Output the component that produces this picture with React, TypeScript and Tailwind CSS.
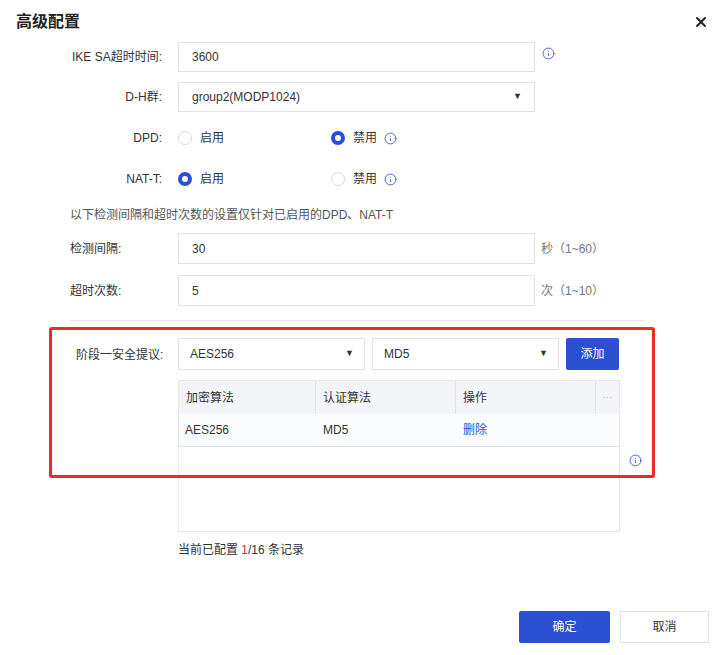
import { X, Info } from "lucide-react";

const font = { fontFamily: '"Liberation Sans", "Noto Sans CJK SC", sans-serif' };

const Caret = () => <span className="text-[9px] text-[#333]">▼</span>;

const Radio = ({ on, label }: { on?: boolean; label: string }) => (
  <div className="flex w-[153px] items-center gap-2">
    <span
      className={
        on
          ? "h-[14px] w-[14px] rounded-full border-[4px] border-[#2b4fd1] bg-white"
          : "h-[14px] w-[14px] rounded-full border border-[#d9d9d9] bg-white"
      }
    />
    <span>{label}</span>
  </div>
);

const InfoIcon = () => <Info className="h-[13px] w-[13px] text-[#3552c8]" strokeWidth={1.6} />;

export default function App() {
  return (
    <div className="h-[655px] w-[719px] bg-white text-[12px] text-[#333]" style={font}>
      <div className="flex items-center justify-between pl-[16px] pr-[10px] pt-[10px]">
        <span className="text-[16px] font-bold text-[#222]">高级配置</span>
        <X className="h-[16px] w-[16px] text-[#222]" strokeWidth={3} />
      </div>

      <div className="mt-[8px] flex items-center">
        <span className="w-[166px] pr-[4px] text-right">IKE SA超时时间:</span>
        <div className="ml-[12px] flex h-[30px] w-[357px] items-center border border-[#e3e3e3] px-[13px]">3600</div>
        <span className="ml-[7px] -mt-[8px]"><InfoIcon /></span>
      </div>
      <div className="mt-[10px] flex items-center">
        <span className="w-[166px] pr-[4px] text-right">D-H群:</span>
        <div className="ml-[12px] flex h-[30px] w-[357px] items-center justify-between border border-[#e3e3e3] pl-[13px] pr-[12px]">
          <span>group2(MODP1024)</span>
          <Caret />
        </div>
      </div>
      <div className="mt-[11px] flex h-[30px] items-center">
        <span className="w-[166px] pr-[4px] text-right">DPD:</span>
        <div className="ml-[12px] flex items-center">
          <Radio label="启用" />
          <Radio on label="禁用" />
        </div>
        <span className="-ml-[100px]"><InfoIcon /></span>
      </div>
      <div className="mt-[11px] flex h-[30px] items-center">
        <span className="w-[166px] pr-[4px] text-right">NAT-T:</span>
        <div className="ml-[12px] flex items-center">
          <Radio on label="启用" />
          <Radio label="禁用" />
        </div>
        <span className="-ml-[100px]"><InfoIcon /></span>
      </div>
      <div className="mt-[12px] pl-[70px] text-[#555]">以下检测间隔和超时次数的设置仅针对已启用的DPD、NAT-T</div>
      <div className="mt-[9px] flex items-center">
        <span className="w-[178px] shrink-0 pl-[70px]">检测间隔:</span>
        <div className="flex h-[31px] w-[357px] items-center border border-[#e3e3e3] px-[13px]">30</div>
        <span className="ml-[6px] text-[#777]">秒（1~60）</span>
      </div>
      <div className="mt-[11px] flex items-center">
        <span className="w-[178px] shrink-0 pl-[70px]">超时次数:</span>
        <div className="flex h-[31px] w-[357px] items-center border border-[#e3e3e3] px-[13px]">5</div>
        <span className="ml-[6px] text-[#777]">次（1~10）</span>
      </div>
      <div className="ml-[70px] mt-[14px] h-px w-[575px] bg-[#e6e6e6]" />

      <div className="relative mt-[6px]">
        <div className="absolute left-[49px] top-0 h-[151px] w-[606px] rounded-[3px] border-[3px] border-[#ee2a24]" />
        <div className="flex pt-[11px]">
          <span className="w-[178px] shrink-0 pl-[76px] pt-[8px]">阶段一安全提议:</span>
          <div className="flex flex-col">
            <div className="flex items-center">
              <div className="flex h-[32px] w-[187px] items-center justify-between border border-[#e3e3e3] pl-[11px] pr-[10px]">
                <span>AES256</span>
                <Caret />
              </div>
              <div className="ml-[7px] flex h-[32px] w-[187px] items-center justify-between border border-[#e3e3e3] pl-[11px] pr-[10px]">
                <span>MD5</span>
                <Caret />
              </div>
              <div className="ml-[7px] flex h-[32px] w-[53px] items-center justify-center rounded-[2px] bg-[#2b4fd1] text-white">添加</div>
            </div>
            <div className="mt-[10px] flex">
              <div className="w-[442px] border border-[#e6e6e6]">
                <div className="flex h-[33px] bg-[#f3f5f8]">
                  <div className="flex w-[137px] items-center border-r border-[#e3e3e3] pl-[7px]">加密算法</div>
                  <div className="flex w-[140px] items-center border-r border-[#e3e3e3] pl-[7px]">认证算法</div>
                  <div className="flex w-[140px] items-center border-r border-[#e3e3e3] pl-[7px]">操作</div>
                  <div className="flex flex-1 items-center justify-center text-[10px] text-[#bbb]">···</div>
                </div>
                <div className="flex h-[33px] items-center border-b border-[#e6e6e6] bg-[#fbfcfd]">
                  <div className="w-[137px] pl-[6px]">AES256</div>
                  <div className="w-[140px] pl-[7px]">MD5</div>
                  <div className="w-[140px] pl-[7px] text-[#2b4fd1]">删除</div>
                </div>
                <div className="h-[84px]" />
              </div>
              <span className="ml-[9px] mt-[74px]"><InfoIcon /></span>
            </div>
            <div className="mt-[9px]">
              当前已配置 <span className="text-[#c33]">1</span>/16 条记录
            </div>
          </div>
        </div>
      </div>

      <div className="mt-[52px] flex justify-end gap-[10px] pr-[10px]">
        <div className="flex h-[32px] w-[91px] items-center justify-center rounded-[2px] bg-[#2b4fd1] text-white">确定</div>
        <div className="flex h-[32px] w-[89px] items-center justify-center border border-[#e3e3e3] text-[#333]">取消</div>
      </div>
    </div>
  );
}
